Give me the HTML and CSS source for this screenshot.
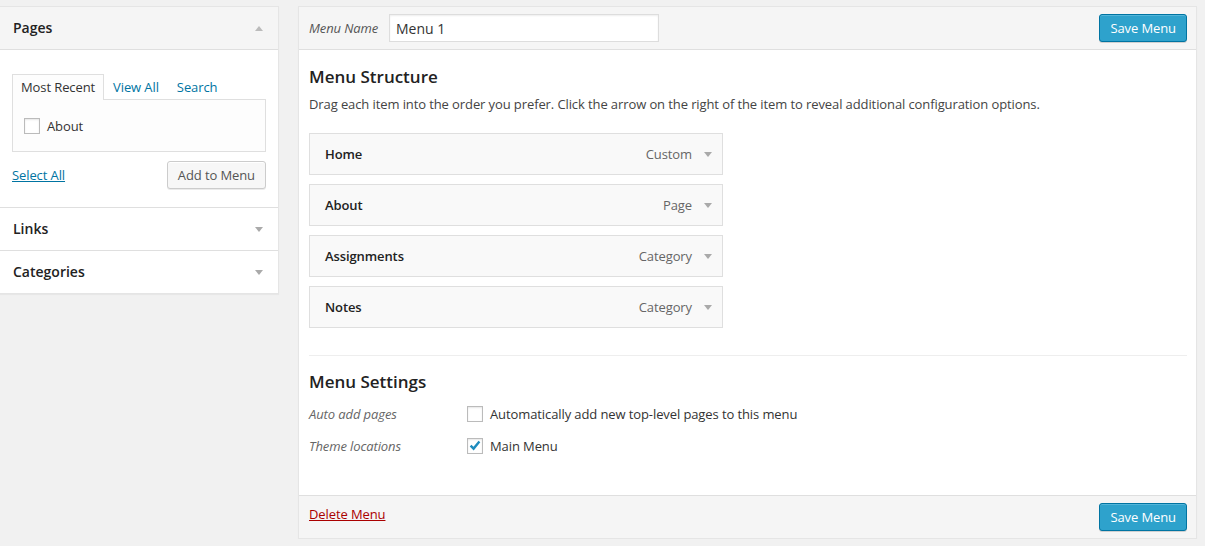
FILE: index.html
```html
<!DOCTYPE html>
<html>
<head>
<meta charset="utf-8">
<link rel="stylesheet" href="styles.css">
</head>
<body>
<div class="wrap">
  <div class="side">
    <div class="acc open">
      <div class="acc-title"><span>Pages</span><span class="arrow up"></span></div>
      <div class="acc-body">
        <ul class="tabs">
          <li class="tab active">Most Recent</li>
          <li class="tab"><a href="#">View All</a></li>
          <li class="tab"><a href="#">Search</a></li>
        </ul>
        <div class="tab-panel">
          <label class="chk"><span class="box"></span>About</label>
        </div>
        <div class="actions">
          <a href="#" class="select-all">Select All</a>
          <button class="btn">Add to Menu</button>
        </div>
      </div>
    </div>
    <div class="acc">
      <div class="acc-title"><span>Links</span><span class="arrow down"></span></div>
    </div>
    <div class="acc">
      <div class="acc-title"><span>Categories</span><span class="arrow down"></span></div>
    </div>
  </div>

  <div class="main">
    <div class="main-header">
      <label class="name-label">Menu Name</label>
      <input class="name-input" type="text" value="Menu 1">
      <button class="btn primary">Save Menu</button>
    </div>
    <div class="main-body">
      <h3>Menu Structure</h3>
      <p class="desc">Drag each item into the order you prefer. Click the arrow on the right of the item to reveal additional configuration options.</p>
      <ul class="items">
        <li class="item"><span class="item-title">Home</span><span class="item-type">Custom</span><span class="arrow down"></span></li>
        <li class="item"><span class="item-title">About</span><span class="item-type">Page</span><span class="arrow down"></span></li>
        <li class="item"><span class="item-title">Assignments</span><span class="item-type">Category</span><span class="arrow down"></span></li>
        <li class="item"><span class="item-title">Notes</span><span class="item-type">Category</span><span class="arrow down"></span></li>
      </ul>
      <div class="settings">
        <h3>Menu Settings</h3>
        <div class="rows">
          <div class="row">
            <span class="row-label">Auto add pages</span>
            <label class="chk"><span class="box"></span>Automatically add new top-level pages to this menu</label>
          </div>
          <div class="row">
            <span class="row-label">Theme locations</span>
            <label class="chk"><span class="box"><svg viewBox="0 0 16 16" width="16" height="16"><path d="M3.6 7.6 L6.6 10.6 L12.4 3.6" fill="none" stroke="#1e8cbe" stroke-width="2.4"/></svg></span>Main Menu</label>
          </div>
        </div>
      </div>
    </div>
    <div class="main-footer">
      <a href="#" class="delete">Delete Menu</a>
      <button class="btn primary">Save Menu</button>
    </div>
  </div>
</div>
</body>
</html>
```

FILE: styles.css
```css
* { box-sizing: border-box; }

body {
  margin: 0;
  background: #f1f1f1;
  font-family: "Open Sans", "Liberation Sans", sans-serif;
  font-size: 13px;
  line-height: 1.4;
  letter-spacing: -0.1px;
  color: #444;
}

a { color: #0074a2; }

.wrap {
  display: flex;
  align-items: flex-start;
  padding-top: 6px;
}

/* ---------- side ---------- */
.side {
  width: 279px;
  background: #fff;
  border: 1px solid #e5e5e5;
  border-left: 0;
  box-shadow: 0 1px 1px rgba(0, 0, 0, .04);
}

.acc-title {
  height: 43px;
  border-bottom: 1px solid #dfdfdf;
  display: flex;
  align-items: center;
  justify-content: space-between;
  padding: 0 15px 0 13px;
  font-size: 14px;
  font-weight: 600;
  letter-spacing: 0;
  color: #222;
}

.acc:last-child .acc-title {
  border-bottom: 0;
  height: 42px;
}

.acc.open .acc-title { background: #f5f5f5; }

.arrow {
  width: 0;
  height: 0;
  border-left: 4px solid transparent;
  border-right: 4px solid transparent;
}
.arrow.down { border-top: 5px solid #aaa; }
.arrow.up { border-bottom: 5px solid #bbb; }

.acc-body {
  padding: 24px 12px 18px 12px;
  border-bottom: 1px solid #dfdfdf;
}

.tabs {
  display: flex;
  margin: 0;
  padding: 0;
  list-style: none;
  position: relative;
  z-index: 1;
}

.tab {
  height: 26px;
  margin-bottom: -1px;
  padding: 0 8px;
  border: 1px solid transparent;
  border-bottom: 0;
  line-height: 24px;
}

.tab a { text-decoration: none; color: #0074a2; }

.tab.active {
  border-color: #dfdfdf;
  background: #fdfdfd;
  color: #333;
}

.tab-panel {
  height: 53px;
  border: 1px solid #dfdfdf;
  background: #fdfdfd;
  padding: 1px 11px 0;
  display: flex;
  align-items: center;
}

.chk {
  display: flex;
  align-items: center;
  color: #333;
}

.box {
  width: 16px;
  height: 16px;
  margin-right: 7px;
  border: 1px solid #bbb;
  background: #fff;
  box-shadow: inset 0 1px 2px rgba(0, 0, 0, .1);
  display: flex;
  align-items: center;
  justify-content: center;
  flex: none;
}
.box svg { display: block; margin: -1px; }

.actions {
  margin-top: 9px;
  display: flex;
  justify-content: space-between;
  align-items: center;
}

.select-all { color: #0074a2; }

.btn {
  height: 28px;
  padding: 0 10px;
  border: 1px solid #ccc;
  border-radius: 3px;
  background: #f7f7f7;
  color: #555;
  font-family: "Open Sans", "Liberation Sans", sans-serif;
  font-size: 13px;
  line-height: 26px;
  letter-spacing: -0.1px;
  box-shadow: inset 0 1px 0 #fff, 0 1px 0 rgba(0, 0, 0, .08);
  cursor: pointer;
}

.btn.primary {
  background: #2ea2cc;
  border-color: #0074a2;
  color: #fff;
  box-shadow: inset 0 1px 0 rgba(120, 200, 230, .5), 0 1px 0 rgba(0, 0, 0, .15);
}

/* ---------- main ---------- */
.main {
  margin-left: 19px;
  width: 899px;
  background: #fff;
  border: 1px solid #e5e5e5;
  box-shadow: 0 1px 1px rgba(0, 0, 0, .04);
}

.main-header {
  height: 43px;
  background: #f5f5f5;
  border-bottom: 1px solid #dfdfdf;
  display: flex;
  align-items: center;
  padding: 0 9px 0 10px;
}

.name-label {
  width: 80px;
  font-style: italic;
  color: #555;
}

.name-input {
  width: 270px;
  height: 28px;
  border: 1px solid #ddd;
  box-shadow: inset 0 1px 2px rgba(0, 0, 0, .07);
  padding: 0 6px;
  font-family: "Open Sans", "Liberation Sans", sans-serif;
  font-size: 14px;
  color: #333;
  background: #fff;
}

.main-header .btn,
.main-footer .btn { margin-left: auto; }

.main-body {
  padding: 16px 9px 33px 10px;
}

h3 {
  margin: 0;
  font-size: 17px;
  font-weight: 600;
  line-height: 22px;
  letter-spacing: 0;
  color: #222;
}

.desc {
  margin: 7px 0 20px;
  line-height: 18px;
}

.items {
  list-style: none;
  margin: 0;
  padding: 0;
}

.item {
  width: 414px;
  height: 42px;
  margin-bottom: 9px;
  border: 1px solid #dfdfdf;
  background: #f9f9f9;
  display: flex;
  align-items: center;
  padding: 0 10px 0 15px;
}
.item:last-child { margin-bottom: 0; }

.item-title {
  font-weight: 600;
  color: #222;
}

.item-type {
  margin-left: auto;
  margin-right: 12px;
  color: #666;
}

.settings {
  margin-top: 27px;
  border-top: 1px solid #eee;
  padding-top: 15px;
}

.rows { margin-top: 5px; }

.row {
  height: 32px;
  display: flex;
  align-items: center;
}

.row-label {
  width: 158px;
  font-style: italic;
  color: #666;
}

.main-footer {
  height: 43px;
  border-top: 1px solid #dfdfdf;
  background: #f5f5f5;
  display: flex;
  align-items: center;
  padding: 0 9px 0 10px;
}

.delete {
  color: #a00;
  margin-bottom: 6px;
}
```
